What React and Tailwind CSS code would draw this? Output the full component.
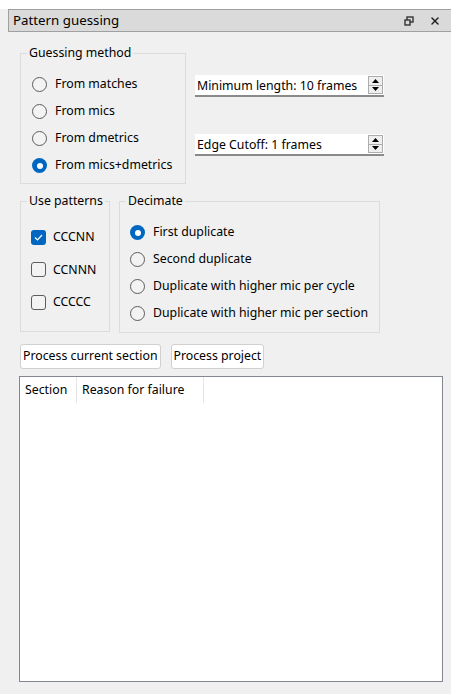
import { X } from "lucide-react";

const font = { fontFamily: '"Noto Sans", "Liberation Sans", sans-serif' };

function Radio({ checked, label }) {
  return (
    <div className="flex items-center h-[27px] whitespace-nowrap">
      {checked ? (
        <span className="w-[15px] h-[15px] shrink-0 rounded-full bg-[#0067c0] flex items-center justify-center">
          <span className="w-[6px] h-[6px] rounded-full bg-white" />
        </span>
      ) : (
        <span className="w-[15px] h-[15px] shrink-0 rounded-full border border-[#5c5c5c] bg-[#f3f3f3]" />
      )}
      <span className="ml-[8px] text-[12.3px] text-black">{label}</span>
    </div>
  );
}

function Checkbox({ checked, label }) {
  return (
    <div className="flex items-center h-[32.5px] whitespace-nowrap">
      {checked ? (
        <span className="w-[15px] h-[15px] shrink-0 rounded-[3px] bg-[#0067c0] flex items-center justify-center">
          <svg width="9" height="7" viewBox="0 0 9 7" fill="none">
            <path d="M1 3.5 L3.5 6 L8 1" stroke="white" strokeWidth="1.2" />
          </svg>
        </span>
      ) : (
        <span className="w-[15px] h-[15px] shrink-0 rounded-[3px] border border-[#5c5c5c] bg-[#f3f3f3]" />
      )}
      <span className="ml-[7px] text-[12.3px] text-black">{label}</span>
    </div>
  );
}

function SpinBox({ text }) {
  return (
    <div className="flex w-[189px] h-[22px] bg-white border-b-2 border-[#8a8a8a]">
      <div className="flex-1 pl-[2px] text-[12.3px] leading-[22px] text-black whitespace-nowrap">{text}</div>
      <div className="w-[15px] my-[1px] mr-[1px] flex flex-col border border-[#acacac] bg-[#efefef]">
        <div className="flex-1 flex items-center justify-center border-b border-[#acacac]">
          <svg width="7" height="4" viewBox="0 0 7 4"><path d="M0 4 L3.5 0 L7 4 Z" fill="#000" /></svg>
        </div>
        <div className="flex-1 flex items-center justify-center">
          <svg width="7" height="4" viewBox="0 0 7 4"><path d="M0 0 L3.5 4 L7 0 Z" fill="#000" /></svg>
        </div>
      </div>
    </div>
  );
}

function Group({ title, className, bodyClass, children }) {
  return (
    <fieldset className={`min-w-0 shrink-0 border border-[#dcdcdc] ${className}`}>
      <legend className="ml-[6px] px-[2px] text-[12.3px] leading-[16px] text-black whitespace-nowrap">{title}</legend>
      <div className={bodyClass}>{children}</div>
    </fieldset>
  );
}

export default function App() {
  return (
    <div className="w-[451px] h-[694px] bg-[#f0f0f0] overflow-hidden" style={font}>
      <div className="h-[9px] bg-white" />
      {/* Dock title bar */}
      <div className="ml-[8px] h-[23px] bg-[#dadada] border border-r-0 border-[#a0a0a0] flex items-center">
        <span className="ml-[4px] text-[13.3px] text-black flex-1">Pattern guessing</span>
        <svg width="10" height="10" viewBox="0 0 10 10" className="mr-[15px]" fill="none" stroke="#333" strokeWidth="1.4">
          <rect x="3" y="1" width="6" height="5" />
          <rect x="1" y="4" width="5" height="5" fill="#dadada" />
        </svg>
        <X className="w-[12px] h-[12px] mr-[10px] text-[#222]" strokeWidth={3} />
      </div>

      <div className="px-[20px] pt-[13px]">
        <div className="flex items-start">
          <Group title="Guessing method" className="w-[166px] h-[139px]" bodyClass="pl-[11px] pt-[10px]">
            <Radio label="From matches" />
            <Radio label="From mics" />
            <Radio label="From dmetrics" />
            <Radio checked label="From mics+dmetrics" />
          </Group>
          <div className="ml-[9px] pt-[30px] flex flex-col gap-[37px]">
            <SpinBox text="Minimum length: 10 frames" />
            <SpinBox text="Edge Cutoff: 1 frames" />
          </div>
        </div>

        <div className="flex items-start mt-[9px]">
          <Group title="Use patterns" className="w-[90px] h-[139px]" bodyClass="pl-[10px] pt-[12px]">
            <Checkbox checked label="CCCNN" />
            <Checkbox label="CCNNN" />
            <Checkbox label="CCCCC" />
          </Group>
          <Group title="Decimate" className="ml-[9px] w-[261px] h-[140px]" bodyClass="pl-[10px] pt-[10px]">
            <Radio checked label="First duplicate" />
            <Radio label="Second duplicate" />
            <Radio label="Duplicate with higher mic per cycle" />
            <Radio label="Duplicate with higher mic per section" />
          </Group>
        </div>

        <div className="flex gap-[10px] mt-[11px]">
          <button className="h-[25px] px-[2px] bg-white border border-[#d0d0d0] rounded-[3px] text-[12.3px] text-black">
            Process current section
          </button>
          <button className="h-[25px] px-[2px] bg-white border border-[#d0d0d0] rounded-[3px] text-[12.3px] text-black">
            Process project
          </button>
        </div>

        <div className="mt-[7px] -ml-[1px] w-[424px] h-[306px] bg-white border border-[#828790]">
          <div className="flex h-[26px] text-[12.3px] text-black">
            <div className="w-[57px] pl-[5px] leading-[26px] border-r border-[#e5e5e5]">Section</div>
            <div className="w-[127px] pl-[5px] leading-[26px] border-r border-[#e5e5e5]">Reason for failure</div>
          </div>
        </div>
      </div>
    </div>
  );
}
